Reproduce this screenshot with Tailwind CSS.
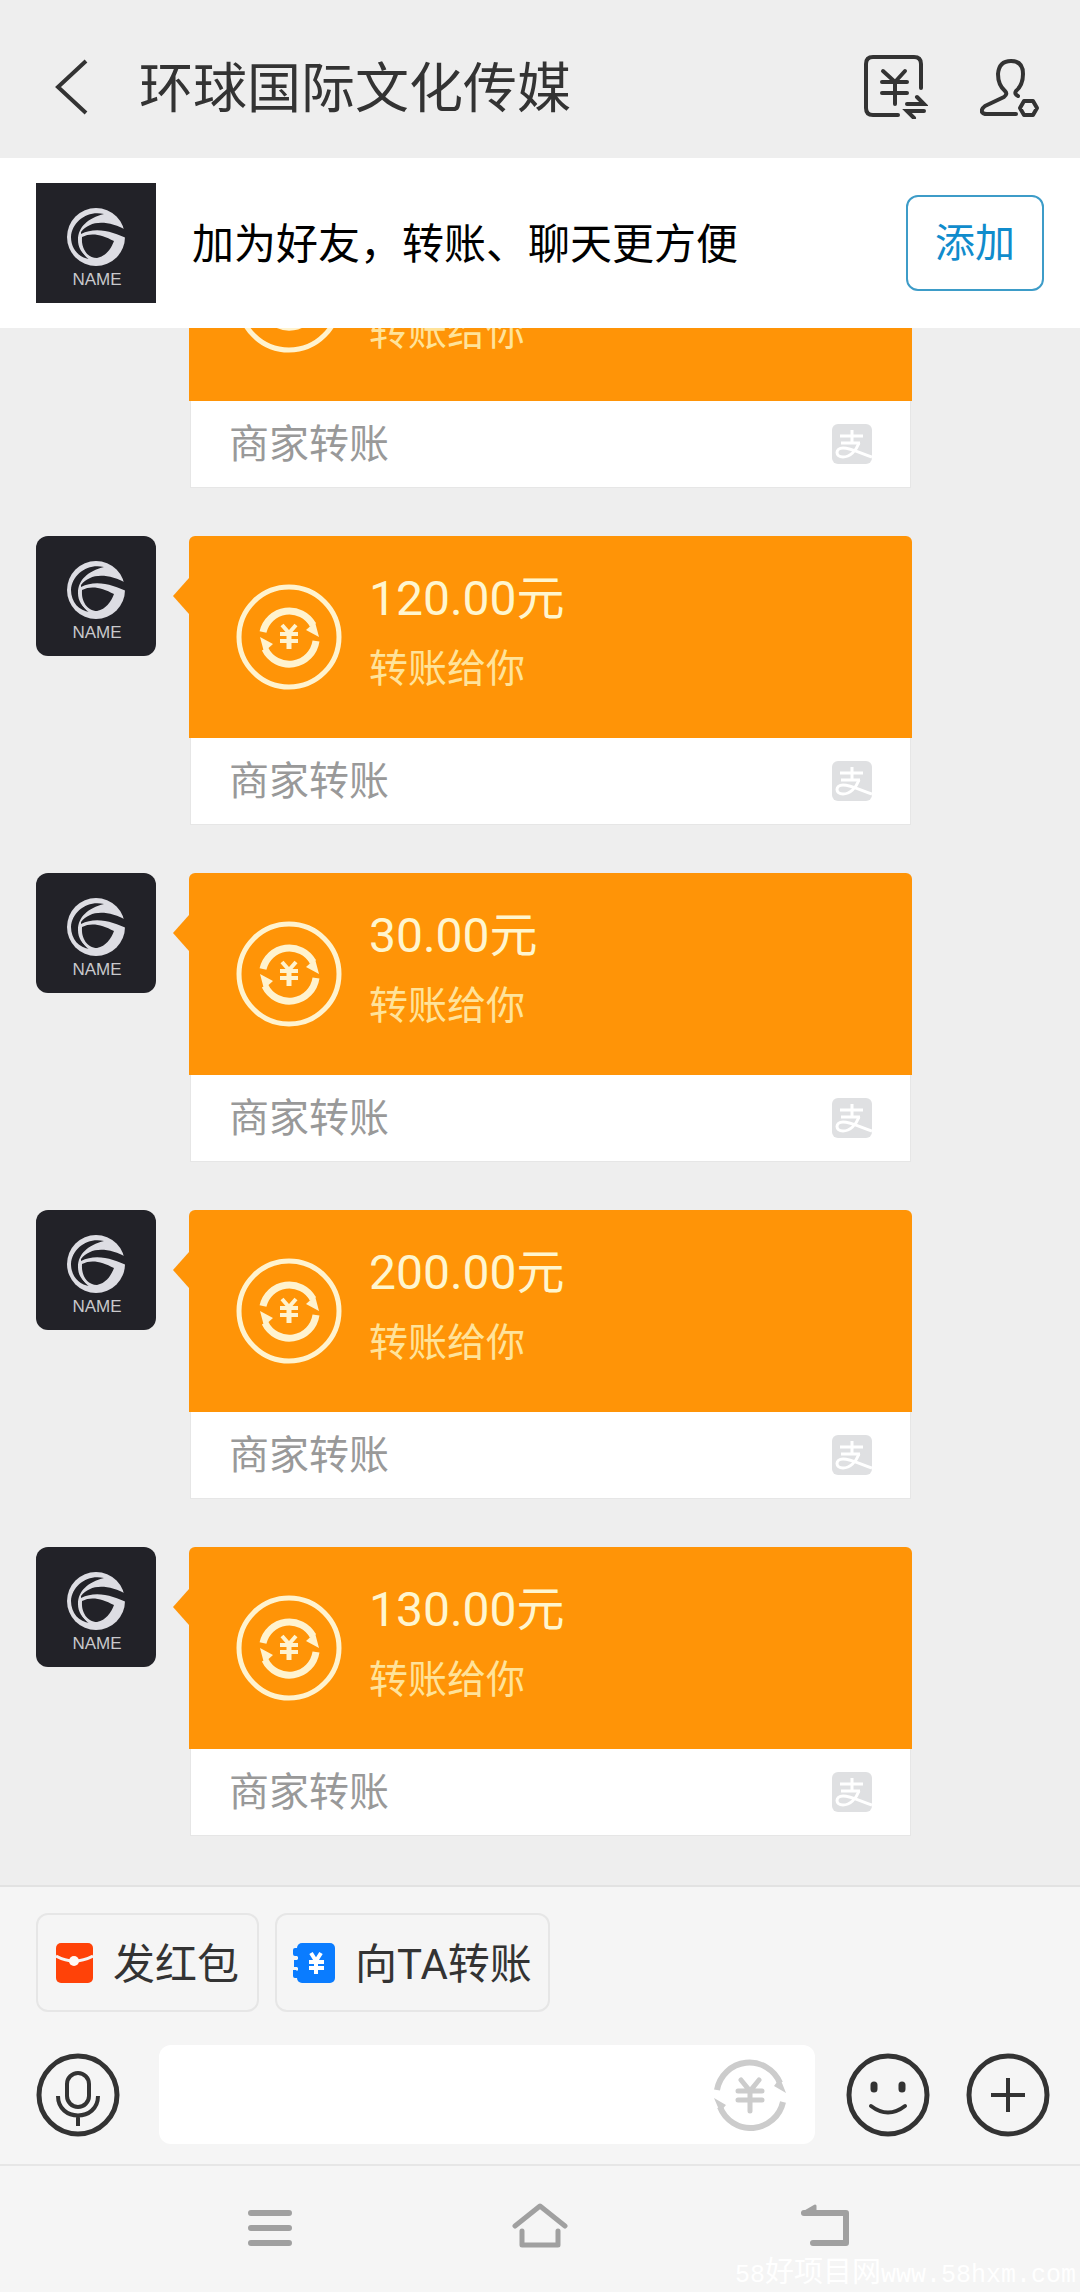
<!DOCTYPE html>
<html lang="zh-CN">
<head>
    <meta charset="UTF-8">
    <meta name="viewport" content="width=device-width, initial-scale=1.0">
    <title>环球国际文化传媒</title>

    <!-- Tailwind CSS -->
    <script src="https://cdn.jsdelivr.net/npm/@tailwindcss/browser@4"></script>
</head>
<body class="h-screen flex flex-col bg-[#eeeeee] font-['Roboto','Noto_Sans_CJK_SC',sans-serif] text-[#333333]">
    <!-- Shared icons -->
    <svg class="hidden" aria-hidden="true">
        <symbol id="logo" viewBox="0 0 120 120">
            <circle cx="60" cy="54" r="29" fill="#dddde3"/>
            <g fill="#222228">
                <path d="M45 49C54 38 70 36 92 48L92 56C78 49 60 43 45 51Z"/>
                <path d="M68 31C52 27 36 38 35 54C35 66 43 75 54 76C46 71 42 65 42 57C42 44 52 35 68 31Z"/>
                <path d="M46 54C56 49 66 52 78 58C75 66 70 73 61 75C51 75 45 65 46 54Z"/>
            </g>
            <path fill="none" stroke="#dddde3" stroke-width="2" d="M45 51C43 61 46 70 54 76"/>
            <text x="61" y="102" text-anchor="middle" font-family="Liberation Sans, sans-serif" font-size="17" fill="#c9c9cc">NAME</text>
        </symbol>
        <symbol id="coin" viewBox="0 0 72 72">
            <g fill="none" stroke="currentColor" stroke-width="6">
                <path d="M3 31A33 33 0 0 1 66 24"/>
                <path d="M69 43A33 33 0 0 1 6 48"/>
                <path stroke-linecap="round" stroke-width="5" d="M27 21L36 32L45 21M36 32V52M24 32H48M24 41H48"/>
            </g>
            <path fill="currentColor" d="M72 34L60 27L66 19ZM0 39L12 46L6 53Z"/>
        </symbol>
        <symbol id="transfer" viewBox="0 0 106 106">
            <circle cx="53" cy="53" r="50" fill="none" stroke="currentColor" stroke-width="5"/>
            <g fill="none" stroke="currentColor" stroke-width="7">
                <path d="M27 48A27 27 0 0 1 77 41"/>
                <path d="M80 57A27 27 0 0 1 29 65"/>
                <path stroke-width="4" d="M46 41L53 49L60 41M44 50H62M44 57H62"/>
                <path stroke-width="5" d="M53 48V65"/>
            </g>
            <path fill="currentColor" d="M83 53L70 46L79 38ZM24 53L37 60L28 68Z"/>
        </symbol>
        <symbol id="alipay" viewBox="0 0 40 40">
            <rect width="40" height="40" rx="6" fill="#dfe0e2"/>
            <g fill="none" stroke="#ffffff" stroke-width="3">
                <path d="M8 12H31M20 6V19M9 19H28"/>
                <path d="M27 19C24 27 18 33 11 33C3 33 3 24 11 24C19 24 28 29 40 33"/>
            </g>
        </symbol>
    </svg>

    <!-- Header -->
    <header class="h-[158px] shrink-0 flex items-center pt-4 pl-12 pr-9">
        <button class="w-12 h-14" aria-label="返回">
            <svg class="w-12 h-14" viewBox="0 0 48 56" fill="none" stroke="#333333" stroke-width="4"><path d="M38 2L10 28L38 54"/></svg>
        </button>
        <h1 class="flex-1 ml-[43px] pt-1.5 text-[54px] leading-[64px]">环球国际文化传媒</h1>
        <button class="w-16 h-16" aria-label="转账记录">
            <svg class="w-16 h-16" viewBox="0 0 64 64" fill="none" stroke="#333333" stroke-width="4" stroke-linecap="round">
                <path d="M57 33V9Q57 2 50 2H9Q2 2 2 9V53Q2 60 9 60H34"/>
                <path d="M19 16L31 27L41 16M18 27H43M18 38H43M31 27V49"/>
                <path d="M43 49H60L53 42M60 56H43L50 63"/>
            </svg>
        </button>
        <button class="w-16 h-16 ml-13" aria-label="好友设置">
            <svg class="w-16 h-16" viewBox="0 0 64 64" fill="none" stroke="#333333" stroke-width="4" stroke-linecap="round" stroke-linejoin="round">
                <path d="M38 41Q34 39 36 36Q43 30 43 19Q43 6 31 6Q19 6 18 19Q18 30 25 36Q28 39 24 42L5 51Q1 54 2 57Q3 59 7 59H36"/>
                <path d="M44 46H53L57 53L53 60H44L40 53Z"/>
            </svg>
        </button>
    </header>

    <!-- Add friend bar -->
    <section class="h-[170px] shrink-0 flex items-center bg-white px-9">
        <svg class="w-[120px] h-[120px] bg-[#222228]"><use href="#logo"/></svg>
        <p class="flex-1 ml-9 pt-1 text-[42px] leading-[56px] text-black">加为好友，转账、聊天更方便</p>
        <button class="w-[138px] h-24 rounded-xl border-2 border-[#3d9cc8] pt-0.5 text-[40px] text-[#108ccc]">添加</button>
    </section>

    <!-- Messages -->
    <main class="flex-1 min-h-0 flex flex-col justify-end gap-12 overflow-hidden px-9 pb-[49px]">
        <article class="shrink-0 flex items-start">
            <svg class="w-[120px] h-[120px] rounded-xl bg-[#222228]"><use href="#logo"/></svg>
            <svg class="w-4 h-9 ml-[17px] mt-[42px]" viewBox="0 0 16 36"><path fill="#ff9407" d="M16 0V36L0 18Z"/></svg>
            <div class="w-[723px]">
                <div class="h-[202px] flex rounded-t-md bg-[#ff9407] pl-[47px] pt-[35px]">
                    <svg class="w-[106px] h-[106px] mt-[13px] text-[#fff3cf]"><use href="#transfer"/></svg>
                    <div class="ml-[27px]">
                        <p class="text-[48px] leading-[56px] text-[#fff6cf]">&nbsp;</p>
                        <p class="mt-[14px] text-[39px] leading-[56px] text-[#ffe39a]">转账给你</p>
                    </div>
                </div>
                <div class="h-[87px] mx-px flex items-center justify-between border border-t-0 border-[#e6e6e6] bg-white px-[38px]">
                    <p class="pt-0.5 text-[40px] leading-[56px] text-[#999999]">商家转账</p>
                    <svg class="w-10 h-10"><use href="#alipay"/></svg>
                </div>
            </div>
        </article>

        <article class="shrink-0 flex items-start">
            <svg class="w-[120px] h-[120px] rounded-xl bg-[#222228]"><use href="#logo"/></svg>
            <svg class="w-4 h-9 ml-[17px] mt-[42px]" viewBox="0 0 16 36"><path fill="#ff9407" d="M16 0V36L0 18Z"/></svg>
            <div class="w-[723px]">
                <div class="h-[202px] flex rounded-t-md bg-[#ff9407] pl-[47px] pt-[35px]">
                    <svg class="w-[106px] h-[106px] mt-[13px] text-[#fff3cf]"><use href="#transfer"/></svg>
                    <div class="ml-[27px]">
                        <p class="text-[48px] leading-[56px] text-[#fff6cf]">120.00元</p>
                        <p class="mt-[14px] text-[39px] leading-[56px] text-[#ffe39a]">转账给你</p>
                    </div>
                </div>
                <div class="h-[87px] mx-px flex items-center justify-between border border-t-0 border-[#e6e6e6] bg-white px-[38px]">
                    <p class="pt-0.5 text-[40px] leading-[56px] text-[#999999]">商家转账</p>
                    <svg class="w-10 h-10"><use href="#alipay"/></svg>
                </div>
            </div>
        </article>

        <article class="shrink-0 flex items-start">
            <svg class="w-[120px] h-[120px] rounded-xl bg-[#222228]"><use href="#logo"/></svg>
            <svg class="w-4 h-9 ml-[17px] mt-[42px]" viewBox="0 0 16 36"><path fill="#ff9407" d="M16 0V36L0 18Z"/></svg>
            <div class="w-[723px]">
                <div class="h-[202px] flex rounded-t-md bg-[#ff9407] pl-[47px] pt-[35px]">
                    <svg class="w-[106px] h-[106px] mt-[13px] text-[#fff3cf]"><use href="#transfer"/></svg>
                    <div class="ml-[27px]">
                        <p class="text-[48px] leading-[56px] text-[#fff6cf]">30.00元</p>
                        <p class="mt-[14px] text-[39px] leading-[56px] text-[#ffe39a]">转账给你</p>
                    </div>
                </div>
                <div class="h-[87px] mx-px flex items-center justify-between border border-t-0 border-[#e6e6e6] bg-white px-[38px]">
                    <p class="pt-0.5 text-[40px] leading-[56px] text-[#999999]">商家转账</p>
                    <svg class="w-10 h-10"><use href="#alipay"/></svg>
                </div>
            </div>
        </article>

        <article class="shrink-0 flex items-start">
            <svg class="w-[120px] h-[120px] rounded-xl bg-[#222228]"><use href="#logo"/></svg>
            <svg class="w-4 h-9 ml-[17px] mt-[42px]" viewBox="0 0 16 36"><path fill="#ff9407" d="M16 0V36L0 18Z"/></svg>
            <div class="w-[723px]">
                <div class="h-[202px] flex rounded-t-md bg-[#ff9407] pl-[47px] pt-[35px]">
                    <svg class="w-[106px] h-[106px] mt-[13px] text-[#fff3cf]"><use href="#transfer"/></svg>
                    <div class="ml-[27px]">
                        <p class="text-[48px] leading-[56px] text-[#fff6cf]">200.00元</p>
                        <p class="mt-[14px] text-[39px] leading-[56px] text-[#ffe39a]">转账给你</p>
                    </div>
                </div>
                <div class="h-[87px] mx-px flex items-center justify-between border border-t-0 border-[#e6e6e6] bg-white px-[38px]">
                    <p class="pt-0.5 text-[40px] leading-[56px] text-[#999999]">商家转账</p>
                    <svg class="w-10 h-10"><use href="#alipay"/></svg>
                </div>
            </div>
        </article>

        <article class="shrink-0 flex items-start">
            <svg class="w-[120px] h-[120px] rounded-xl bg-[#222228]"><use href="#logo"/></svg>
            <svg class="w-4 h-9 ml-[17px] mt-[42px]" viewBox="0 0 16 36"><path fill="#ff9407" d="M16 0V36L0 18Z"/></svg>
            <div class="w-[723px]">
                <div class="h-[202px] flex rounded-t-md bg-[#ff9407] pl-[47px] pt-[35px]">
                    <svg class="w-[106px] h-[106px] mt-[13px] text-[#fff3cf]"><use href="#transfer"/></svg>
                    <div class="ml-[27px]">
                        <p class="text-[48px] leading-[56px] text-[#fff6cf]">130.00元</p>
                        <p class="mt-[14px] text-[39px] leading-[56px] text-[#ffe39a]">转账给你</p>
                    </div>
                </div>
                <div class="h-[87px] mx-px flex items-center justify-between border border-t-0 border-[#e6e6e6] bg-white px-[38px]">
                    <p class="pt-0.5 text-[40px] leading-[56px] text-[#999999]">商家转账</p>
                    <svg class="w-10 h-10"><use href="#alipay"/></svg>
                </div>
            </div>
        </article>
    </main>

    <!-- Input area -->
    <footer class="shrink-0 border-t-2 border-[#e2e2e2] bg-[#f5f5f5] pt-[26px] pb-5 pl-9 pr-[30px]">
        <div class="flex gap-4">
            <button class="h-[99px] flex items-center gap-5 rounded-xl border-2 border-[#e6e6e6] px-[18px] text-[42px]">
                <svg class="w-[37px] h-10" viewBox="0 0 37 40">
                    <rect width="37" height="40" rx="5" fill="#ff4208"/>
                    <path d="M0 13Q18 23 37 13" fill="none" stroke="#f5f5f5" stroke-width="3"/>
                    <circle cx="18" cy="18" r="5" fill="#fffaf5"/>
                </svg>
                <span class="pt-1">发红包</span>
            </button>
            <button class="h-[99px] flex items-center gap-5 rounded-xl border-2 border-[#e6e6e6] px-4 text-[42px]">
                <svg class="w-[42px] h-10" viewBox="0 0 42 40">
                    <rect x="4" width="38" height="40" rx="5" fill="#0a7cff"/>
                    <path d="M2 5H6V13H2Q0 13 0 11V7Q0 5 2 5ZM1 17H6V24H1ZM0 27H6V35H2Q0 35 0 33Z" fill="#0a7cff"/>
                    <path d="M3 15H5M3 26H5" stroke="#f5f5f5" stroke-width="3"/>
                    <path d="M18 10L23 18L28 10M16 19H31M16 25H31M23 18V31" fill="none" stroke="#ffffff" stroke-width="4"/>
                </svg>
                <span class="pt-1">向TA转账</span>
            </button>
        </div>

        <div class="mt-[33px] flex items-center">
            <button class="w-21 h-21" aria-label="语音">
                <svg class="w-21 h-21" viewBox="0 0 84 84" fill="none" stroke="#333333" stroke-width="4">
                    <circle cx="42" cy="42" r="39" stroke-width="5"/>
                    <rect x="31" y="20" width="22" height="34" rx="11"/>
                    <path d="M22 43C22 69 62 69 62 43M42 63V73"/>
                </svg>
            </button>
            <div class="flex-1 min-w-0 flex items-center ml-[39px] mr-[31px] h-[99px] rounded-xl bg-white pr-[29px]">
                <input type="text" aria-label="消息" class="flex-1 min-w-0 h-full px-6 text-[40px] outline-none">
                <button class="w-18 h-18 text-[#cccccc]" aria-label="转账">
                    <svg class="w-18 h-18"><use href="#coin"/></svg>
                </button>
            </div>
            <button class="w-21 h-21" aria-label="表情">
                <svg class="w-21 h-21" viewBox="0 0 84 84" fill="none" stroke="#333333" stroke-width="4" stroke-linecap="round">
                    <circle cx="42" cy="42" r="39" stroke-width="5"/>
                    <path stroke-width="7" d="M28 32V36M56 32V36"/>
                    <path d="M25 53Q42 66 59 53"/>
                </svg>
            </button>
            <button class="w-21 h-21 ml-9" aria-label="更多">
                <svg class="w-21 h-21" viewBox="0 0 84 84" fill="none" stroke="#333333" stroke-width="4">
                    <circle cx="42" cy="42" r="39" stroke-width="5"/>
                    <path d="M42 25V59M25 42H59"/>
                </svg>
            </button>
        </div>
    </footer>

    <!-- System navigation -->
    <nav class="relative h-32 shrink-0 grid grid-cols-3 justify-items-center border-t-2 border-[#e6e6e6] bg-[#f5f5f5] px-[135px] pt-8">
        <button class="h-14" aria-label="菜单">
            <svg class="w-14 h-14" viewBox="0 0 56 56" fill="none" stroke="#a0a0a0" stroke-width="6" stroke-linecap="round"><path d="M9 15H47M9 30H47M9 45H47"/></svg>
        </button>
        <button class="h-14" aria-label="主页">
            <svg class="w-14 h-14" viewBox="0 0 56 56" fill="none" stroke="#a0a0a0" stroke-width="5" stroke-linecap="round" stroke-linejoin="round"><path d="M3 28L28 8L53 28M10 33V47H46V33"/></svg>
        </button>
        <button class="h-14" aria-label="后退">
            <svg class="w-[86px] h-14" viewBox="0 0 86 56" fill="none" stroke="#a0a0a0" stroke-width="6" stroke-linecap="round" stroke-linejoin="round">
                <path d="M37 15H79V45H46"/>
                <path fill="#a0a0a0" stroke-width="3" d="M36 15L48 8V15Z"/>
            </svg>
        </button>
        <p class="absolute right-1 bottom-0 font-['Liberation_Mono','Noto_Sans_CJK_SC',monospace] text-[25px] leading-8 text-white"><span>58</span><span class="text-[29px]">好项目网</span><span>www.58hxm.com</span></p>
    </nav>
</body>
</html>
